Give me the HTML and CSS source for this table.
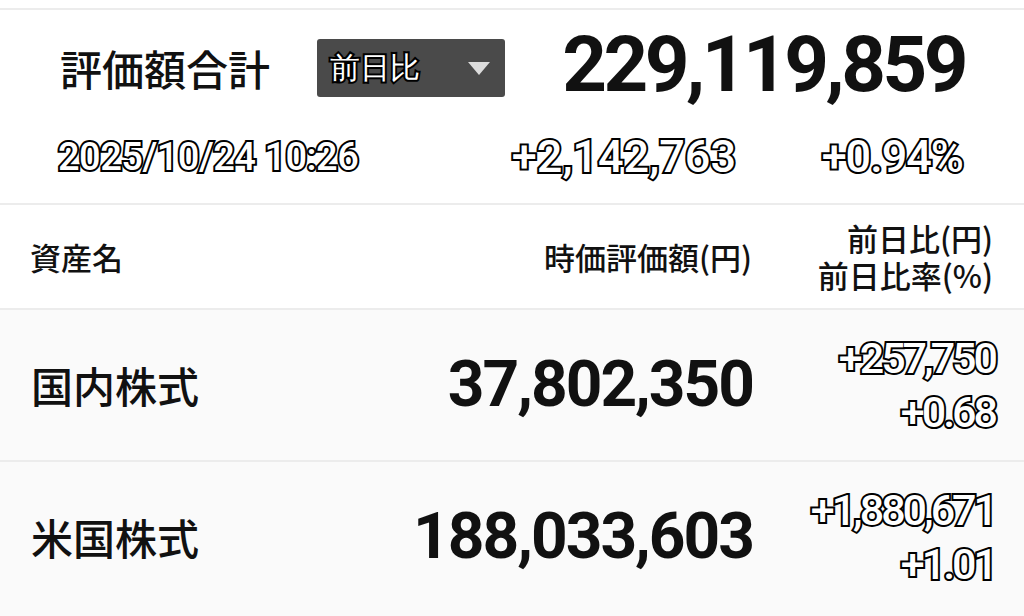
FILE: index.html
```html
<!DOCTYPE html>
<html lang="ja">
<head>
<meta charset="utf-8">
<title>評価額合計</title>
<link rel="stylesheet" href="styles.css">
</head>
<body>
<div class="top-gap"></div>
<section class="summary">
  <div class="sum-row1">
    <h1 class="title">評価額合計</h1>
    <div class="select">
      <span class="outline sel-text">前日比</span>
      <svg class="caret" width="22" height="13" viewBox="0 0 22 13"><polygon points="0,0 22,0 11,13" fill="#dcdcdc"/></svg>
    </div>
    <div class="total">229,119,859</div>
  </div>
  <div class="sum-row2">
    <span class="outline date">2025/10/24&nbsp;10:26</span>
    <span class="outline diff">+2,142,763</span>
    <span class="outline pct">+0.94%</span>
  </div>
</section>
<section class="table">
  <div class="thead">
    <div class="th">資産名</div>
    <div class="th val">時価評価額(円)</div>
    <div class="th chg"><div>前日比(円)</div><div>前日比率(%)</div></div>
  </div>
  <div class="trow">
    <div class="name">国内株式</div>
    <div class="value">37,802,350</div>
    <div class="change"><span class="outline">+257,750</span><span class="outline">+0.68</span></div>
  </div>
  <div class="trow">
    <div class="name">米国株式</div>
    <div class="value">188,033,603</div>
    <div class="change"><span class="outline">+1,880,671</span><span class="outline">+1.01</span></div>
  </div>
</section>
</body>
</html>
```

FILE: styles.css
```css
html, body {
  margin: 0;
  padding: 0;
}
body {
  width: 1024px;
  height: 616px;
  overflow: hidden;
  background: #fafafa;
  color: #111;
  font-family: "Noto Sans CJK JP", "Noto Sans", sans-serif;
}
.top-gap {
  height: 8px;
  background: #fff;
}
.summary {
  background: #fff;
  border-top: 2px solid #ececec;
  height: 195px;
  box-sizing: border-box;
  padding: 29px 62px 0 60px;
}
.sum-row1 {
  display: flex;
  align-items: center;
  height: 58px;
}
.title {
  margin: 0;
  font-size: 42px;
  font-weight: 500;
  line-height: 1;
  letter-spacing: 0;
}
.select {
  margin-left: 47px;
  width: 188px;
  height: 58px;
  box-sizing: border-box;
  background: #4a4a4a;
  border-radius: 3px;
  display: flex;
  align-items: center;
  justify-content: space-between;
  padding: 0 15px 0 13px;
}
.sel-text {
  font-family: "Noto Sans CJK JP", sans-serif;
  font-size: 30px;
  font-weight: 700;
  line-height: 1;
}
.caret {
  display: block;
}
.total {
  margin-left: auto;
  margin-top: -6px;
  font-family: Roboto, "Liberation Sans", sans-serif;
  font-weight: 700;
  font-size: 78px;
  line-height: 1;
  letter-spacing: -3.5px;
  margin-right: -3px;
}
.outline {
  color: #fff;
  -webkit-text-stroke: 4px #000;
  paint-order: stroke fill;
  font-family: Roboto, "Liberation Sans", sans-serif;
  font-weight: 500;
}
.sum-row2 {
  display: grid;
  grid-template-columns: 1fr auto 227px;
  align-items: center;
  height: 38px;
  margin-top: 37px;
  margin-right: -1px;
}
.date {
  margin-left: -2px;
  font-size: 38px;
  line-height: 1;
  letter-spacing: -0.5px;
}
.diff, .pct {
  font-size: 45px;
  line-height: 1;
  text-align: right;
}
.diff {
  letter-spacing: 0;
}
.pct {
  letter-spacing: -1px;
}
.table {
  background: #fafafa;
}
.thead, .trow {
  display: grid;
  grid-template-columns: 1fr auto 241px;
  align-items: center;
  padding: 0 31px 0 30px;
  border-top: 2px solid #ececec;
}
.thead {
  background: #fff;
  height: 103px;
}
.th {
  font-size: 31px;
  line-height: 37px;
  font-weight: 500;
  color: #111;
}
.th.chg {
  text-align: right;
  margin-top: -2px;
}
.th.val {
  text-align: right;
}
.trow {
  background: #fafafa;
  height: 150px;
}
.name {
  font-size: 42px;
  line-height: 1;
  font-weight: 500;
  padding-left: 1px;
}
.value {
  font-family: Roboto, "Liberation Sans", sans-serif;
  font-weight: 700;
  font-size: 64px;
  line-height: 1;
  letter-spacing: -2px;
  text-align: right;
  margin-right: -1px;
}
.change {
  display: flex;
  flex-direction: column;
  align-items: flex-end;
}
.change .outline {
  font-size: 43px;
  line-height: 54px;
  letter-spacing: -3px;
  margin-right: -2px;
}
```
